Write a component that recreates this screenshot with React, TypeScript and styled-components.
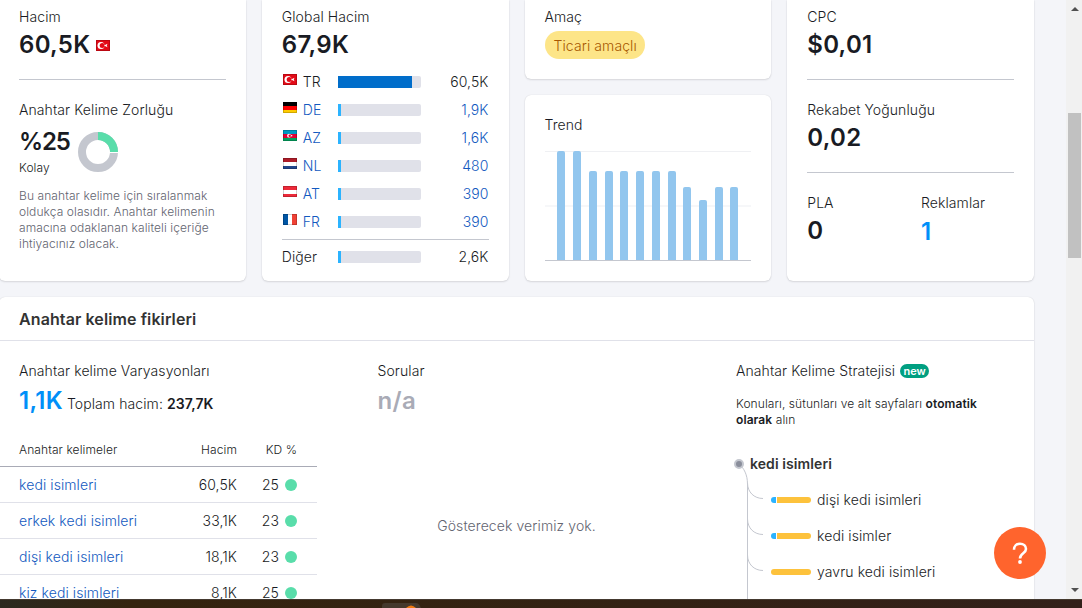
import React from "react";
import styled, { createGlobalStyle } from "styled-components";

const Global = createGlobalStyle`
  * { box-sizing: border-box; }
  body { margin: 0; overflow: hidden; background: #f4f5f9; font-family: Inter, "Liberation Sans", sans-serif; font-size: 14px; font-weight: 300; letter-spacing: .09px; line-height: 20px; color: #191b23; }
`;

const Screen = styled.div`display: flex; flex-direction: column; height: 608px; overflow: hidden;`;
const Viewport = styled.div`display: flex; height: 599px; overflow: hidden;`;
const Content = styled.main`margin-left: -1px; flex: none; width: 1067px; overflow: hidden;`;
const Cards = styled.div`display: grid; grid-template-columns: repeat(4, 1fr); gap: 16px; height: 281px; width: 1035px;`;
const Column = styled.div`display: flex; flex-direction: column; gap: 16px;`;
const Card = styled.section<{ $top?: number; $grow?: boolean }>`
  background: #fff; border-radius: ${(p) => (p.$grow ? "6px" : "0 0 6px 6px")};
  padding: ${(p) => p.$top ?? 7}px 20px 0; box-shadow: 0 0 1px rgba(25,27,35,.16), 0 1px 2px rgba(25,27,35,.12);
  flex: ${(p) => (p.$grow ? "1" : "none")};
`;
const ShortCard = styled(Card)`height: 79px;`;
const Label = styled.div`height: 20px; white-space: nowrap;`;
const Value = styled.div<{ $color?: string }>`
  display: flex; align-items: center; height: 28px; margin-top: 4px; gap: 6px; letter-spacing: .3px;
  font-size: 24px; line-height: 28px; font-weight: 600; color: ${(p) => p.$color ?? "#191b23"}; white-space: nowrap;
`;
const AdsValue = styled(Value)`margin-top: 5px;`;
const Divider = styled.hr`border: 0; height: 1px; margin: 20px 0; background: #c4c7cf;`;
const KdRow = styled.div`display: flex; height: 64px;`;
const KdText = styled.div`padding-top: 4px; width: 59px;`;
const KdValue = styled(Value)`letter-spacing: -1.1px;`;
const Kolay = styled.div`font-size: 12px; line-height: 16px; margin-top: 4px;`;
const Donut = styled.svg`margin-top: 12px; display: block;`;
const Note = styled.p`margin: 4px 0 0; font-size: 12px; line-height: 16px; color: #62646f; white-space: nowrap;`;
const Countries = styled.div`margin-top: 9px;`;
const Country = styled.div<{ $link?: boolean }>`
  display: grid; grid-template-columns: 21px 35px 83px 1fr; align-items: center; height: 28px;
  color: ${(p) => (p.$link ? "#1259c0" : "#191b23")};
`;
const Other = styled(Country)`grid-template-columns: 56px 83px 1fr;`;
const OtherDivider = styled(Divider)`margin: 3px 0;`;
const Flag = styled.svg`display: block; width: 14px; height: 11px;`;
const ListFlag = styled(Flag)`margin: 0 0 5px 1px;`;
const Track = styled.div`height: 12px; border-radius: 0 2px 2px 0; background: #e0e1e9; overflow: hidden;`;
const Fill = styled.div<{ $w: number; $dark?: boolean }>`height: 12px; width: ${(p) => p.$w}px; background: ${(p) => (p.$dark ? "#006dca" : "#2bb3ff")};`;
const Num = styled.span`text-align: right;`;
const Intent = styled.span`display: flex; align-items: center; width: 100px; height: 28px; margin-top: 4px; padding: 2px 0 0 9px; border-radius: 14px; background: #fde588; color: #a75800; white-space: nowrap;`;
const Chart = styled.svg`display: block; margin-top: 15px;`;
const Pair = styled.div`display: grid; grid-template-columns: 1fr 93px;`;

const Ideas = styled.section`margin-top: 16px; width: 1035px; height: 330px; background: #fff; border-radius: 6px 6px 0 0; box-shadow: 0 0 1px rgba(25,27,35,.16), 0 1px 2px rgba(25,27,35,.12);`;
const IdeasHead = styled.h2`margin: 0; height: 44px; padding: 0 20px; font-size: 16px; line-height: 44px; font-weight: 600; letter-spacing: .1px; color: #333; border-bottom: 1px solid #e0e1e9;`;
const IdeasBody = styled.div`display: grid; grid-template-columns: 318px 318px 318px; column-gap: 40.5px;`;
const Block = styled.div`padding-top: 20px;`;
const Pad = styled.div`padding-left: 20px;`;
const Total = styled.span`font-size: 14px; font-weight: 300; line-height: 20px; padding-top: 6px; letter-spacing: .09px; color: #191b23; b { font-weight: 600; }`;
const IdeaValue = styled(Value)`margin-top: 6px; gap: 4px;`;
const HeadRow = styled.div`display: grid; grid-template-columns: 1fr 80px 60px 20px; height: 36px; margin-top: 16px; padding: 2px 0 0 20px; align-items: center; font-size: 12px; border-bottom: 1px solid #a9abb6;`;
const Row = styled.div`display: grid; grid-template-columns: 1fr 80px 42px 18px 20px; height: 36px; padding-left: 20px; align-items: center; border-bottom: 1px solid #e0e1e9;`;
const Link = styled.a`color: #1259c0; white-space: nowrap;`;
const Dot = styled.i`width: 12px; height: 12px; border-radius: 50%; background: #59ddaa; justify-self: end;`;
const Empty = styled.div`margin-top: 101px; text-align: center; color: #62646f;`;
const StrategyLabel = styled(Label)`display: flex; align-items: center; gap: 5px;`;
const New = styled.span`width: 29px; height: 14px; text-align: center; border-radius: 7px; background: #009f81; color: #fff; font-size: 11px; line-height: 14px; font-weight: 600; letter-spacing: 0;`;
const Desc = styled.p`margin: 15px 0 0; width: 260px; font-size: 12px; line-height: 16px; b { font-weight: 600; }`;
const Tree = styled.div`display: grid; grid-template-columns: 35px 1fr; margin-top: 18px; height: 153px;`;
const Lines = styled.svg`display: block; margin-left: -2px; overflow: visible;`;
const Topics = styled.div`margin-left: -21px;`;
const Root = styled.div`height: 36px; line-height: 36px; font-weight: 600; color: #333;`;
const Topic = styled.div`display: flex; align-items: center; height: 36px; padding-left: 21px;`;
const Meter = styled.span`display: flex; gap: 1px; width: 40px; height: 6px; border-radius: 3px; overflow: hidden; margin-right: 6px;`;
const MeterPart = styled.span<{ $blue?: boolean }>`background: ${(p) => (p.$blue ? "#2bb3ff" : "#fdc23c")}; ${(p) => (p.$blue ? "width: 5px;" : "flex: 1;")}`;

const Scrollbar = styled.div`width: 16px; flex: none; background: #f1f1f1; display: flex; flex-direction: column; padding: 7px 1px 7px 2px;`;
const Thumb = styled.div`height: 145px; margin-top: 102px; margin-bottom: auto; background: #c1c1c1;`;
const Arrow = styled.svg`display: block; margin-left: 3px;`;
const Help = styled.button`position: absolute; left: 994px; top: 527px; width: 52px; height: 52px; border: 0; padding: 0; border-radius: 50%; background: #ff642d;`;
const HelpIcon = styled.svg`display: block;`;
const Taskbar = styled.footer`height: 9px; background: linear-gradient(90deg, #2b2a20, #35240f 12%, #342214 60%, #33201a); border-top: 1px solid #44392f; padding-left: 382px;`;
const TaskIcon = styled.svg`display: block; margin-top: 3px;`;

function FlagIcon({ code }: { code: string }) {
  const stripes = (a: string, b: string, c: string) => (
    <><rect width="14" height="4" fill={a} /><rect y="4" width="14" height="4" fill={b} /><rect y="8" width="14" height="3" fill={c} /></>
  );
  return (
    <>
      {code === "TR" && <><rect width="14" height="11" fill="#e30a17" /><circle cx="5" cy="5.5" r="3.5" fill="#fff" /><circle cx="6.2" cy="5.5" r="2.5" fill="#e30a17" /><path d="M8 5.5l3.5-1.7-.7 1.7.7 1.7z" fill="#fff" /></>}
      {code === "DE" && stripes("#000", "#f00", "#fc0")}
      {code === "AZ" && <>{stripes("#0098c3", "#e00034", "#00a15f")}<circle cx="6" cy="5.7" r="1.9" fill="#fff" /><circle cx="6.7" cy="5.7" r="1.2" fill="#e00034" /><circle cx="8.6" cy="5.7" r=".8" fill="#fff" /></>}
      {code === "NL" && stripes("#ae1c28", "#fff", "#21468b")}
      {code === "AT" && stripes("#ed2939", "#fff", "#ed2939")}
      {code === "FR" && <><rect width="5" height="11" fill="#0055a4" /><rect x="5" width="4" height="11" fill="#fff" /><rect x="9" width="5" height="11" fill="#ef4135" /></>}
      <rect x=".5" y=".5" width="13" height="10" fill="none" stroke="#000" strokeOpacity=".18" />
    </>
  );
}

const countries: [string, string][] = [["TR", "60,5K"], ["DE", "1,9K"], ["AZ", "1,6K"], ["NL", "480"], ["AT", "390"], ["FR", "390"]];
const bars = [[12, 0], [28, 0], [44, 20], [60, 20], [75, 20], [91, 20], [107, 20], [123, 20], [138, 36], [154, 49], [170, 36], [185, 36]];
const keywords = [["kedi isimleri", "60,5K", "25"], ["erkek kedi isimleri", "33,1K", "23"], ["dişi kedi isimleri", "18,1K", "23"], ["kiz kedi isimleri", "8,1K", "25"]];
const topics: [string, boolean][] = [["dişi kedi isimleri", true], ["kedi isimler", true], ["yavru kedi isimleri", false]];

export default function App() {
  return (
    <Screen>
      <Global />
      <Viewport>
        <Content>
          <Cards>
            <Card>
              <Label>Hacim</Label>
              <Value>60,5K<Flag viewBox="0 0 14 11"><FlagIcon code="TR" /></Flag></Value>
              <Divider />
              <Label>Anahtar Kelime Zorluğu</Label>
              <KdRow>
                <KdText><KdValue>%25</KdValue><Kolay>Kolay</Kolay></KdText>
                <Donut width="40" height="40" viewBox="0 0 40 40">
                  <circle cx="20" cy="20" r="16" fill="none" stroke="#c4c7cf" strokeWidth="8" />
                  <path d="M20 4A16 16 0 0 1 36 20" fill="none" stroke="#59ddaa" strokeWidth="8" />
                  <path d="M31 20.5H40" stroke="#fff" />
                </Donut>
              </KdRow>
              <Note>Bu anahtar kelime için sıralanmak<br />oldukça olasıdır. Anahtar kelimenin<br />amacına odaklanan kaliteli içeriğe<br />ihtiyacınız olacak.</Note>
            </Card>
            <Card>
              <Label>Global Hacim</Label>
              <Value>67,9K</Value>
              <Countries>
                {countries.map(([code, v], i) => (
                  <Country key={code} $link={i > 0}>
                    <ListFlag viewBox="0 0 14 11"><FlagIcon code={code} /></ListFlag>
                    <span>{code}</span>
                    <Track><Fill $w={i ? 3 : 74} $dark={!i} /></Track>
                    <Num>{v}</Num>
                  </Country>
                ))}
              </Countries>
              <OtherDivider />
              <Other><span>Diğer</span><Track><Fill $w={3} /></Track><Num>2,6K</Num></Other>
            </Card>
            <Column>
              <ShortCard><Label>Amaç</Label><Intent>Ticari amaçlı</Intent></ShortCard>
              <Card $grow $top={20}>
                <Label>Trend</Label>
                <Chart width="206" height="112" viewBox="0 0 206 112">
                  <path d="M0 1.5H206" stroke="#eff0f3" />
                  <path d="M0 56H206" stroke="#f6f7f9" strokeWidth="2" />
                  {bars.map(([x, y]) => <path key={x} d={`M${x} 110V${y + 3}q0-2 2-2h4q2 0 2 2V110z`} fill="#92c6ee" />)}
                  <path d="M0 110.5H206" stroke="#c4c7cf" />
                </Chart>
              </Card>
            </Column>
            <Card>
              <Label>CPC</Label><Value>$0,01</Value>
              <Divider />
              <Label>Rekabet Yoğunluğu</Label><Value>0,02</Value>
              <Divider />
              <Pair>
                <div><Label>PLA</Label><Value>0</Value></div>
                <div><Label>Reklamlar</Label><AdsValue $color="#008ff8">1</AdsValue></div>
              </Pair>
            </Card>
          </Cards>
          <Ideas>
            <IdeasHead>Anahtar kelime fikirleri</IdeasHead>
            <IdeasBody>
              <Block>
                <Pad>
                  <Label>Anahtar kelime Varyasyonları</Label>
                  <IdeaValue $color="#008ff8">1,1K<Total>Toplam hacim: <b>237,7K</b></Total></IdeaValue>
                </Pad>
                <HeadRow><span>Anahtar kelimeler</span><Num>Hacim</Num><Num>KD %</Num></HeadRow>
                {keywords.map(([k, v, kd]) => <Row key={k}><Link>{k}</Link><Num>{v}</Num><Num>{kd}</Num><Dot /></Row>)}
              </Block>
              <Block>
                <Pad><Label>Sorular</Label><IdeaValue $color="#a9abb6">n/a</IdeaValue></Pad>
                <Empty>Gösterecek verimiz yok.</Empty>
              </Block>
              <Block>
                <Pad>
                  <StrategyLabel>Anahtar Kelime Stratejisi<New>new</New></StrategyLabel>
                  <Desc>Konuları, sütunları ve alt sayfaları <b>otomatik<br />olarak</b> alın</Desc>
                  <Tree>
                    <Lines width="35" height="153" viewBox="0 0 35 153" fill="none" stroke="#c4c7cf">
                      <path d="M5 18C10 22 13.5 29 13.5 38V153" />
                      {[0, 36, 72].map((y) => <path key={y} d="M13.5 37C13.5 46 20 52.5 29 52.5" transform={`translate(0 ${y})`} />)}
                      <circle cx="5" cy="18" r="4" fill="#8a8e9b" strokeWidth="2" />
                    </Lines>
                    <Topics>
                      <Root>kedi isimleri</Root>
                      {topics.map(([t, blue]) => <Topic key={t}><Meter>{blue && <MeterPart $blue />}<MeterPart /></Meter>{t}</Topic>)}
                    </Topics>
                  </Tree>
                </Pad>
              </Block>
            </IdeasBody>
          </Ideas>
        </Content>
        <Scrollbar>
          <Arrow width="8" height="4" viewBox="0 0 8 4"><path d="M0 4L4 0L8 4z" fill="#505050" /></Arrow>
          <Thumb />
          <Arrow width="8" height="4" viewBox="0 0 8 4"><path d="M0 0H8L4 4z" fill="#505050" /></Arrow>
        </Scrollbar>
      </Viewport>
      <Taskbar>
        <TaskIcon width="40" height="5" viewBox="0 0 40 5">
          <path d="M0 5V3Q0 0 3 0H34Q37 0 39 5z" fill="#45392d" />
          <path d="M24 5Q29 0 34 5z" fill="#f27a10" />
        </TaskIcon>
      </Taskbar>
      <Help aria-label="Help">
        <HelpIcon width="52" height="52" viewBox="0 0 52 52" fill="none" stroke="#fff" strokeWidth="2.6">
          <path d="M20 22.8C20 19 22.5 16.7 26 16.7C29.6 16.7 32 19 32 22C32 26.5 26 26 26 31.5" />
          <circle cx="26" cy="35" r="1.9" fill="#fff" stroke="none" />
        </HelpIcon>
      </Help>
    </Screen>
  );
}
